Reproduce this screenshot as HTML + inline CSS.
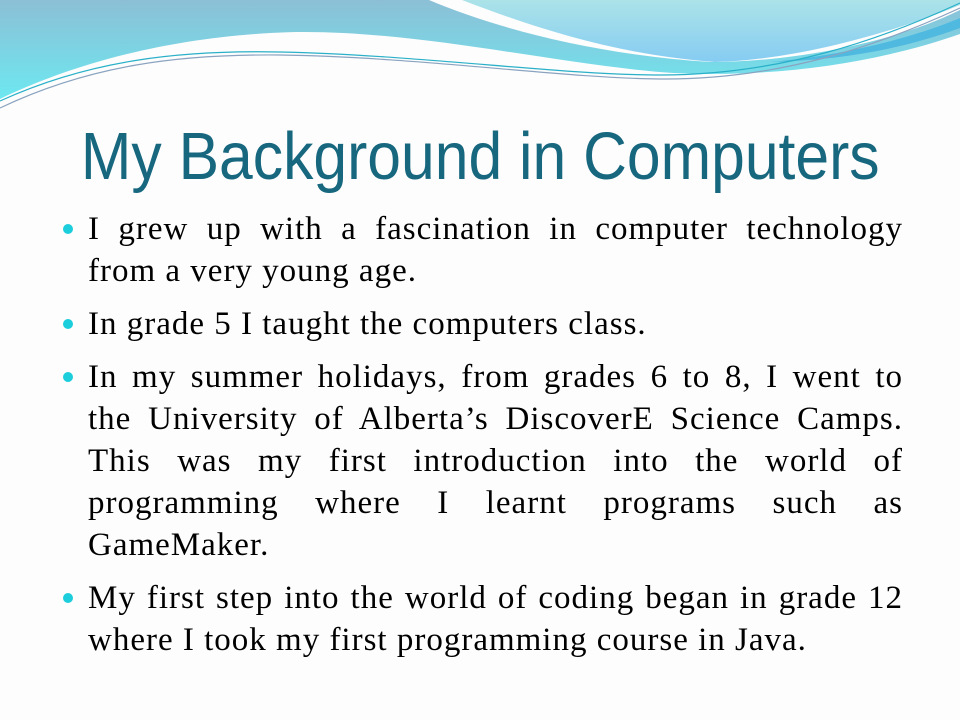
<!DOCTYPE html>
<html><head><meta charset="utf-8"><style>
html,body{margin:0;padding:0}
body{width:960px;height:720px;position:relative;overflow:hidden;background:#fdfdfd}
svg{position:absolute;left:0;top:0}
.title{position:absolute;top:112px;left:0;width:960px;text-align:center;font-family:"Liberation Sans",sans-serif;font-size:67px;color:#17677f;line-height:90px}
.title span{display:inline-block;transform:scaleX(0.905);white-space:nowrap}
.body{position:absolute;left:88px;width:815px;top:208px;font-family:"Liberation Serif",serif;font-size:33px;letter-spacing:1px;color:#000}
.l{height:42px;line-height:42px;white-space:nowrap}
.j{text-align:justify;text-align-last:justify;white-space:normal;word-spacing:0}
.p{position:relative;margin-bottom:11px}
.p:before{content:"";position:absolute;left:-25px;top:16px;width:10px;height:10px;border-radius:50%;background:#1ccedb}
</style></head><body>
<svg width="960" height="130" viewBox="0 0 960 130">
<defs>
<linearGradient id="g1" x1="0" y1="0" x2="0" y2="1"><stop offset="0" stop-color="#8cbfd6"/><stop offset="1" stop-color="#6de8f0"/></linearGradient>
<linearGradient id="g2" x1="0" y1="0" x2="0" y2="1"><stop offset="0" stop-color="#abe3e8"/><stop offset="1" stop-color="#86ccf2"/></linearGradient>
</defs>
<path d="M0,0 H960 V34 C880,62 780,78 674,73 C560,66 400,25 270,33 C150,40 60,70 0,99 Z" fill="url(#g1)"/>
<path d="M429,0 C500,30 600,55 710,62 C800,62 900,40 960,10 V0 Z" fill="#fdfdfd"/>
<path d="M462,0 C540,30 620,55 715,62 C800,60 900,30 960,5 V0 Z" fill="url(#g2)"/>
<path d="M770,62 C850,55 920,35 960,18 V28 C900,50 840,60 770,62 Z" fill="#4fb9e0"/>
<path d="M0,101 C90,60 180,50 280,52 C420,55 560,75 660,75 C780,75 880,40 960,3" fill="none" stroke="#2ab0c8" stroke-width="1.2"/>
<path d="M0,108 C90,65 180,54 280,55 C420,57 560,78 660,79 C780,80 880,45 960,8" fill="none" stroke="#8aa3c0" stroke-width="1.2"/>
</svg>
<div class="title"><span>My Background in Computers</span></div>
<div class="body">
<div class="p"><div class="l j">I grew up with a fascination in computer technology</div><div class="l">from a very young age.</div></div>
<div class="p"><div class="l">In grade 5 I taught the computers class.</div></div>
<div class="p"><div class="l j">In my summer holidays, from grades 6 to 8, I went to</div><div class="l j">the University of Alberta’s DiscoverE Science Camps.</div><div class="l j">This was my first introduction into the world of</div><div class="l j">programming where I learnt programs such as</div><div class="l">GameMaker.</div></div>
<div class="p"><div class="l j">My first step into the world of coding began in grade 12</div><div class="l">where I took my first programming course in Java.</div></div>
</div>
</body></html>
